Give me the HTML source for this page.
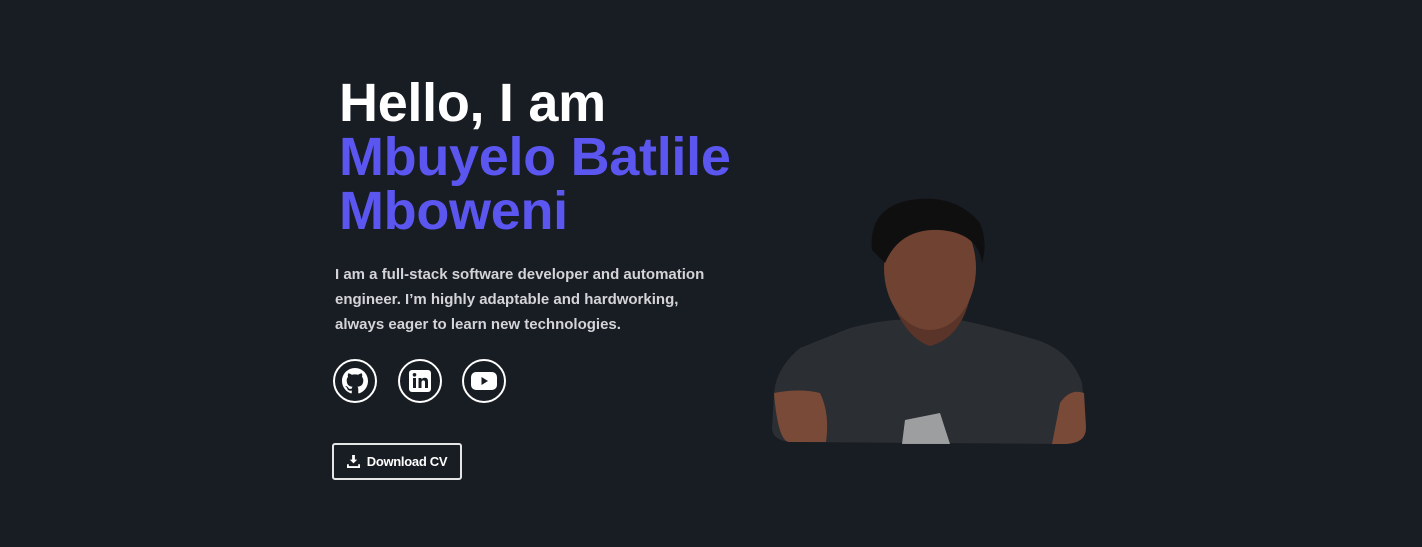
<!DOCTYPE html>
<html><head><meta charset="utf-8"><style>
body{margin:0;width:1422px;height:547px;background:#181c23;overflow:hidden;font-family:"Liberation Sans",sans-serif;position:relative}
h1{position:absolute;left:339px;top:76px;margin:0;font-size:54px;line-height:54px;font-weight:bold;color:#fff;letter-spacing:-0.3px}
h1 span{color:#5b56f0}
p{position:absolute;left:335px;top:262px;margin:0;width:392px;font-size:15px;line-height:25px;font-weight:bold;color:#d4d4d8}
.ic{position:absolute;top:359px;width:40px;height:40px;border:2px solid #fff;border-radius:50%;display:flex;align-items:center;justify-content:center}
.btn{position:absolute;left:332px;top:443px;width:126px;height:33px;border:2px solid #e5e5e5;border-radius:3px;color:#fff;font-size:13px;font-weight:bold;display:flex;align-items:center;justify-content:center;gap:7px;letter-spacing:-0.3px}
</style></head><body>
<h1>Hello, I am<br><span>Mbuyelo Batlile<br>Mboweni</span></h1>
<p>I am a full-stack software developer and automation engineer. I’m highly adaptable and hardworking, always eager to learn new technologies.</p>
<div class="ic" style="left:333px"><svg width="26" height="26" viewBox="0 0 16 16"><path fill="#fff" d="M8 0C3.58 0 0 3.58 0 8c0 3.54 2.29 6.53 5.47 7.59.4.07.55-.17.55-.38v-1.33c-2.23.48-2.7-1.07-2.7-1.07-.36-.93-.89-1.17-.89-1.17-.73-.5.06-.49.06-.49.8.06 1.23.83 1.23.83.72 1.22 1.87.87 2.33.66.07-.52.28-.87.5-1.07-1.78-.2-3.64-.89-3.64-3.95 0-.87.31-1.59.82-2.15-.08-.2-.36-1.02.08-2.12 0 0 .67-.21 2.2.82a7.6 7.6 0 0 1 4 0c1.53-1.04 2.2-.82 2.2-.82.44 1.1.16 1.92.08 2.12.51.56.82 1.27.82 2.15 0 3.07-1.87 3.75-3.65 3.95.29.25.54.73.54 1.48v2.2c0 .21.15.46.55.38A8 8 0 0 0 16 8c0-4.42-3.58-8-8-8z"/></svg></div>
<div class="ic" style="left:398px"><svg width="24" height="24" viewBox="0 0 24 24"><rect x="1" y="1" width="22" height="22" rx="3" fill="#fff"/><rect x="5" y="9" width="3" height="10" fill="#181c23"/><circle cx="6.5" cy="5.8" r="1.8" fill="#181c23"/><path d="M10.5 9h3v1.5c.6-1 1.7-1.8 3.3-1.8 2.5 0 3.2 1.6 3.2 4V19h-3v-5.5c0-1.3-.4-2.1-1.6-2.1-1.3 0-1.9.9-1.9 2.2V19h-3z" fill="#181c23"/></svg></div>
<div class="ic" style="left:462px"><svg width="26" height="20" viewBox="0 0 26 20"><rect x="0" y="1" width="26" height="18" rx="5" fill="#fff"/><path d="M10.5 6v8l6.5-4z" fill="#181c23"/></svg></div>
<div class="btn"><svg width="13" height="13" viewBox="0 0 14 14"><path fill="#fff" d="M5.5 0h3v5h2.5L7 9 3 5h2.5zM0 10h2v2h10v-2h2v4H0z"/></svg>Download CV</div>
<svg style="position:absolute;left:770px;top:188px" width="320" height="260" viewBox="0 0 320 260">
<path d="M4 205 Q6 180 30 160 L80 140 Q120 130 140 132 L190 132 Q220 138 260 150 Q300 160 312 195 L316 235 Q316 255 296 256 L20 254 Q2 252 2 240Z" fill="#2b2e32"/>
<path d="M4 205 Q8 255 20 254 L56 254 Q60 225 50 205 Q30 200 4 205Z" fill="#7a4a38"/>
<path d="M290 215 Q300 200 314 205 L316 240 Q316 255 296 256 L282 256Z" fill="#7a4a38"/>
<path d="M120 108 Q135 150 160 158 Q190 150 200 110Z" fill="#5a3428"/>
<ellipse cx="160" cy="80" rx="46" ry="62" fill="#6f4231"/>
<path d="M102 62 Q98 20 140 12 Q185 5 210 35 Q218 55 212 75 Q208 45 170 42 Q130 40 115 75Z" fill="#0f0f10"/>
<path d="M135 232 L170 225 L180 256 L132 256Z" fill="#cfcfcf" opacity=".7"/>
</svg>
</body></html>
